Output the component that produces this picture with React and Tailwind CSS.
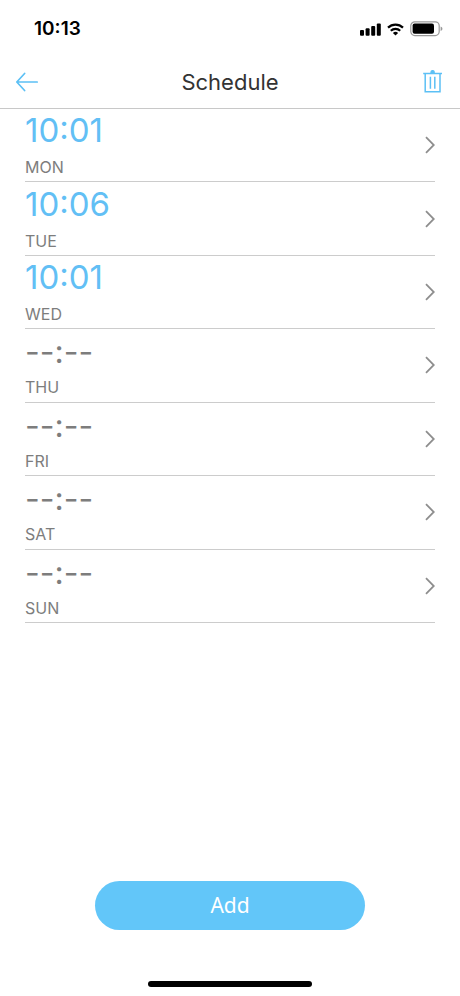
const schedules = [
  { day: "MON", time: "10:01" },
  { day: "TUE", time: "10:06" },
  { day: "WED", time: "10:01" },
  { day: "THU", time: null },
  { day: "FRI", time: null },
  { day: "SAT", time: null },
  { day: "SUN", time: null },
];

function StatusBar() {
  return (
    <div className="flex h-14 items-center justify-between pt-0.5 pl-[34px] pr-[17px] text-black">
      <span className="text-[19px] leading-7 font-semibold">10:13</span>
      <div className="flex items-center gap-1.5">
        <svg width="21" height="13" viewBox="0 0 21 13" fill="currentColor" aria-hidden="true">
          <rect x="0" y="7" width="4" height="5.8" rx="1" />
          <rect x="5.6" y="5.2" width="4" height="7.6" rx="1" />
          <rect x="11.2" y="3" width="4" height="9.8" rx="1" />
          <rect x="16.8" y="0.4" width="4" height="12.4" rx="1" />
        </svg>
        <svg width="17" height="13" viewBox="0 0 17 13" fill="none" stroke="currentColor" strokeWidth="2.2" aria-hidden="true">
          <path d="M1 4.6a10.8 10.8 0 0 1 15 0" />
          <path d="M3.8 7.8a6.8 6.8 0 0 1 9.4 0" />
          <path d="M8.5 12.6 5.9 10a3.8 3.8 0 0 1 5.2 0z" fill="currentColor" stroke="none" />
        </svg>
        <svg width="33" height="16" viewBox="0 0 33 16" aria-hidden="true">
          <rect x="0.8" y="0.8" width="28.4" height="13.8" rx="4" fill="none" stroke="#999" strokeWidth="1.2" />
          <rect x="2.6" y="2.6" width="21.4" height="10.2" rx="2" fill="currentColor" />
          <path d="M30.6 5.4c1.4.5 1.8 1.3 1.8 2.3s-.4 1.8-1.8 2.3z" fill="#999" />
        </svg>
      </div>
    </div>
  );
}

function Header() {
  return (
    <header className="flex h-[53px] items-center justify-between border-b border-[#c8c8c8] px-4">
      <button type="button" aria-label="Back" className="flex w-6 text-[#5cc0f5]">
        <svg width="24" height="20" viewBox="0 0 24 20" fill="none" stroke="currentColor" strokeWidth="1.7" strokeLinecap="round" strokeLinejoin="round">
          <path d="M21.2 10H0.8M8.6 1.5 0.8 10l7.8 8.5" />
        </svg>
      </button>
      <h1 className="text-[22px] leading-7 text-[#333]">Schedule</h1>
      <button type="button" aria-label="Delete" className="flex w-6 justify-end text-[#5cc0f5]">
        <svg width="22" height="24" viewBox="0 0 22 24" fill="none" stroke="currentColor" strokeWidth="1.5">
          <path d="M1.2 3.4H20M3.2 3.4v18.4H18V3.4M8.4 6.8v12M12.8 6.8v12" />
          <path d="M9.1 3V2.2a1.5 1.5 0 0 1 3 0V3z" fill="currentColor" />
        </svg>
      </button>
    </header>
  );
}

function ScheduleRow({ day, time }) {
  return (
    <li className="border-b border-[#ccc]">
      <button type="button" className="flex h-full w-full items-center justify-between text-left">
        <span className="flex flex-col pt-0.5">
          <span className={`h-[42px] ${time ? "text-[33px] leading-[34px] text-[#62bff5]" : "text-[32px] leading-[38px] text-[#7d7d7d]"}`}>
            {time || "--:--"}
          </span>
          <span className="text-base leading-6 text-[#7d7d7d]">{day}</span>
        </span>
        <svg width="10" height="18" viewBox="0 0 10 18" fill="none" stroke="#8e8e8e" strokeWidth="1.8" aria-hidden="true">
          <path d="M1 1.2 8.8 9 1 16.8" />
        </svg>
      </button>
    </li>
  );
}

export default function App() {
  return (
    <div className="flex min-h-screen flex-col bg-white font-['Inter',sans-serif]">
      <StatusBar />
      <Header />
      <main className="flex grow flex-col justify-between">
        <ul className="mx-[25px] grid min-h-[514px] auto-rows-fr">
          {schedules.map((item) => (
            <ScheduleRow key={item.day} day={item.day} time={item.time} />
          ))}
        </ul>
        <button
          type="button"
          className="mx-[95px] mb-[51px] h-[49px] rounded-full bg-[#62c6f9] font-['Noto_Sans',sans-serif] text-[21px] text-white"
        >
          Add
        </button>
      </main>
      <div className="mx-auto mb-[9px] h-1.5 w-[164px] rounded-full bg-black" />
    </div>
  );
}
